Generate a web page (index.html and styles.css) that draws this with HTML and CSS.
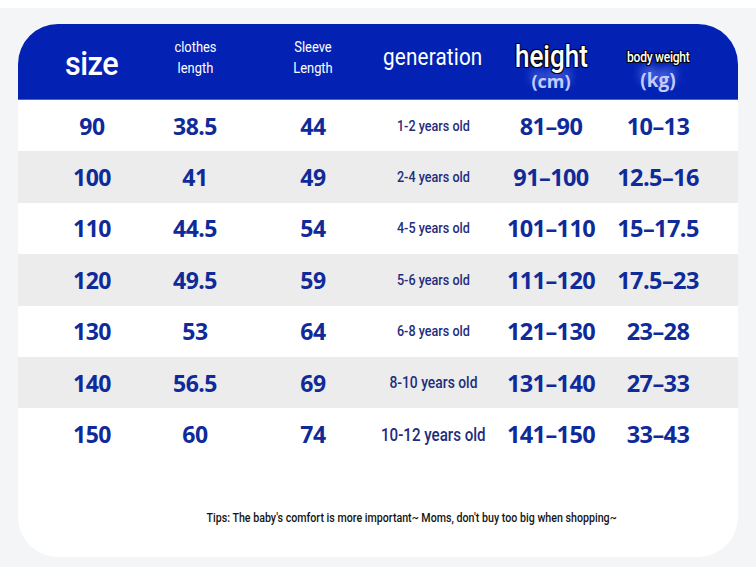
FILE: index.html
```html
<!DOCTYPE html>
<html>
<head>
<meta charset="utf-8">
<link rel="stylesheet" href="styles.css">
</head>
<body>
<div class="page">
  <div class="card">
    <div class="head grid">
      <div class="h-size">size</div>
      <div class="h-two">clothes<br>length</div>
      <div class="h-two">Sleeve<br>Length</div>
      <div class="h-gen">generation</div>
      <div class="h-stack st-h">
        <span class="outlined h-height">height</span>
        <span class="under u-cm">(cm)</span>
      </div>
      <div class="h-stack st-w">
        <span class="outlined h-weight">body weight</span>
        <span class="under u-kg">(kg)</span>
      </div>
    </div>
    <div class="row grid"><div class="n">90</div><div class="n">38.5</div><div class="n">44</div><div class="g">1-2 years old</div><div class="n w">81–90</div><div class="n w">10–13</div></div>
    <div class="row grid alt"><div class="n">100</div><div class="n">41</div><div class="n">49</div><div class="g">2-4 years old</div><div class="n w">91–100</div><div class="n w">12.5–16</div></div>
    <div class="row grid"><div class="n">110</div><div class="n">44.5</div><div class="n">54</div><div class="g">4-5 years old</div><div class="n w">101–110</div><div class="n w">15–17.5</div></div>
    <div class="row grid alt"><div class="n">120</div><div class="n">49.5</div><div class="n">59</div><div class="g">5-6 years old</div><div class="n w">111–120</div><div class="n w">17.5–23</div></div>
    <div class="row grid"><div class="n">130</div><div class="n">53</div><div class="n">64</div><div class="g">6-8 years old</div><div class="n w">121–130</div><div class="n w">23–28</div></div>
    <div class="row grid alt"><div class="n">140</div><div class="n">56.5</div><div class="n">69</div><div class="g lg">8-10 years old</div><div class="n w">131–140</div><div class="n w">27–33</div></div>
    <div class="row grid"><div class="n">150</div><div class="n">60</div><div class="n">74</div><div class="g xl">10-12 years old</div><div class="n w">141–150</div><div class="n w">33–43</div></div>
    <div class="tips">Tips: The baby's comfort is more important~ Moms, don't buy too big when shopping~</div>
  </div>
</div>
</body>
</html>
```

FILE: styles.css
```css
html, body {
  margin: 0;
  padding: 0;
}
body {
  background: #f4f5f7;
  border-top: 8px solid #ffffff;
  height: 559px;
  overflow: hidden;
}
.page {
  padding: 16px 0 0 18px;
}
.card {
  width: 720px;
  height: 533px;
  background: #ffffff;
  border-radius: 40px;
  overflow: hidden;
  display: flex;
  flex-direction: column;
}
.grid {
  display: grid;
  grid-template-columns: 104px 102px 134px 106px 130px 84px;
  padding: 0 38px 0 22px;
  align-items: center;
  justify-items: center;
  text-align: center;
}
.head {
  height: 75px;
  border-bottom: 1px solid #4b63d8;
  background: #0322b4;
  color: #ffffff;
  font-family: "Roboto", sans-serif;
  white-space: nowrap;
}
.h-size {
  font-size: 34px;
  font-weight: 500;
  letter-spacing: -0.5px;
  transform: scaleX(0.9);
  margin-top: 2px;
}
.h-two {
  font-size: 15px;
  line-height: 21px;
  transform: scaleX(0.86);
  margin-top: -8px;
}
.h-gen {
  font-size: 24px;
  transform: scaleX(0.86);
  margin-top: -10px;
  letter-spacing: 0.2px;
}
.h-stack {
  align-self: end;
  display: flex;
  flex-direction: column;
  align-items: center;
}
.st-h {
  margin-bottom: 9px;
}
.st-w {
  margin-bottom: 9px;
}
.outlined {
  position: relative;
  z-index: 2;
  color: #ffffff;
  text-shadow: -1px -1px 0 #000, 1px -1px 0 #000, -1px 1px 0 #000, 1px 1px 0 #000, 0 0 2px #000;
}
.h-height {
  font-size: 31px;
  line-height: 29px;
  font-weight: 500;
  transform: scaleX(0.84);
}
.h-weight {
  font-size: 14px;
  line-height: 16px;
  font-weight: 500;
  transform: scaleX(0.86);
  letter-spacing: -0.3px;
}
.under {
  position: relative;
  z-index: 1;
  font-family: "Open Sans", sans-serif;
  font-weight: 700;
  color: #c3ccff;
  text-shadow: 0 -7px 9px #7f93ff;
}
.u-cm {
  font-size: 18px;
  line-height: 18px;
  margin-top: 1px;
}
.u-kg {
  font-size: 19px;
  line-height: 20px;
  margin-top: 5px;
}
.row {
  height: 51.4px;
  background: #ffffff;
  white-space: nowrap;
}
.row.alt {
  background: #ececec;
}
.n {
  font-family: "Open Sans", "Noto Sans", sans-serif;
  font-weight: 700;
  font-size: 23px;
  color: #0f2a99;
  letter-spacing: -0.5px;
}
.n.w {
  font-size: 23.5px;
  letter-spacing: -0.6px;
}
.g {
  font-family: "Roboto", sans-serif;
  font-weight: 500;
  font-size: 15px;
  color: #1f2d7d;
  transform: scaleX(0.84);
}
.g.lg {
  font-size: 16.5px;
}
.g.xl {
  font-size: 18px;
}
.tips {
  flex: 1;
  display: flex;
  align-items: center;
  justify-content: center;
  padding-left: 82px;
  padding-top: 18px;
  font-family: "Roboto", sans-serif;
  font-weight: 500;
  font-size: 13px;
  color: #141414;
  transform: scaleX(0.82);
  white-space: nowrap;
}
```
